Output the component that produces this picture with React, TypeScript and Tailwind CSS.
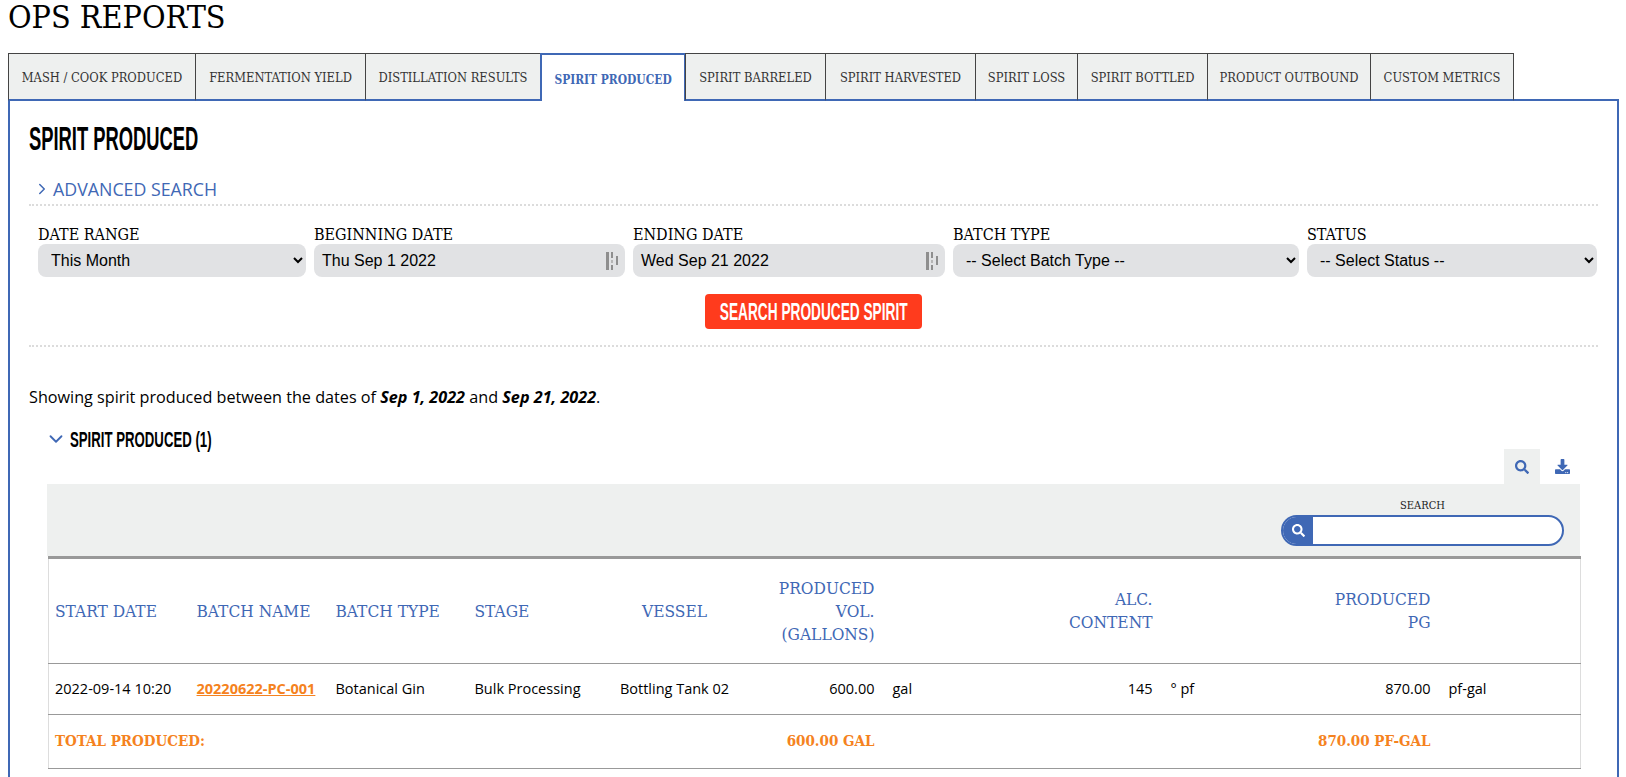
import { FaSearch, FaDownload } from "react-icons/fa";
import { ChevronRight, ChevronDown } from "lucide-react";

const slab = "font-['DejaVu_Serif_Condensed','DejaVu_Serif',serif]";
const bebas = "font-['Liberation_Sans',sans-serif]";
const tabs = [
  ["MASH / COOK PRODUCED", "w-[188px]"],
  ["FERMENTATION YIELD", "w-[171px]"],
  ["DISTILLATION RESULTS", "w-[176px]"],
  ["SPIRIT PRODUCED", "w-[146px]"],
  ["SPIRIT BARRELED", "w-[141px]"],
  ["SPIRIT HARVESTED", "w-[151px]"],
  ["SPIRIT LOSS", "w-[103px]"],
  ["SPIRIT BOTTLED", "w-[131px]"],
  ["PRODUCT OUTBOUND", "w-[164px]"],
  ["CUSTOM METRICS", "w-[144px]"],
];

function DateIcon() {
  return (
    <svg width="14" height="20" viewBox="0 0 14 20" className="shrink-0">
      <rect x="0" y="1" width="3" height="18" fill="#8e8e8e" />
      <rect x="5" y="1" width="2" height="6" fill="#8e8e8e" />
      <rect x="5" y="9" width="2" height="3" fill="#b5b5b5" />
      <rect x="5" y="14" width="2" height="5" fill="#8e8e8e" />
      <rect x="10" y="5" width="2" height="9" fill="#8e8e8e" />
    </svg>
  );
}

function Field({ label, children }: { label: string; children: React.ReactNode }) {
  return (
    <div className="flex flex-col">
      <div className={`${slab} text-[16px] leading-[19px] text-black`}>{label}</div>
      {children}
    </div>
  );
}

function Sel({ text }: { text: string }) {
  return (
    <select className="h-[33px] w-full rounded-[8px] bg-[#e1e2e4] pl-[9px] font-['Liberation_Sans',sans-serif] text-[16px] text-black outline-none">
      <option>{text}</option>
    </select>
  );
}

function DateBox({ text }: { text: string }) {
  return (
    <div className="flex h-[33px] items-center justify-between rounded-[8px] bg-[#e1e2e4] pl-[8px] pr-[5px] font-['Liberation_Sans',sans-serif] text-[16px] text-black">
      <span>{text}</span>
      <DateIcon />
    </div>
  );
}

const th = `${slab} text-[17.2px] leading-[23px] font-normal text-[#3f68b5] px-[7px] align-middle`;
const td = "px-[7px] align-middle text-[14.5px]";
const tot = `${slab} text-[15px] font-bold text-[#f58220] px-[7px] align-middle`;

export default function App() {
  return (
    <div className="flex h-[777px] flex-col overflow-hidden bg-white">
      <h1 className={`${slab} ml-[8px] h-[53px] shrink-0 text-[32px] leading-[34px] font-normal text-black`}>OPS REPORTS</h1>
      <div className="z-10 ml-[8px] flex h-[48px] shrink-0">
        {tabs.map(([t, w]) => {
          const active = t === "SPIRIT PRODUCED";
          return (
            <div
              key={t}
              className={`${w} ${slab} -mr-px flex items-center justify-center whitespace-nowrap pt-[3px] text-[12.8px] ${
                active
                  ? "border-2 border-b-0 border-[#3f68b5] bg-white font-bold text-[#3f68b5]"
                  : "border border-b-2 border-[#444] border-b-[#3f68b5] bg-[#eef0ef] text-[#333]"
              }`}
            >
              {active ? <span className="scale-x-[0.93] whitespace-nowrap">{t}</span> : t}
            </div>
          );
        })}
      </div>
      <div className="-mt-[2px] ml-[8px] mr-[7px] flex-1 border-2 border-[#3f68b5] px-[19px] pb-[60px]">
        <h2 className={`${bebas} mt-[22px] origin-left scale-x-[0.54] whitespace-nowrap text-[34px] leading-[30px] font-bold text-black`}>SPIRIT PRODUCED</h2>
        <div className="mt-[24px] flex h-[24px] items-center text-[#3f68b5]">
          <ChevronRight size={18} strokeWidth={2} className="ml-[4px] mr-[2px]" />
          <span className="font-['Open_Sans',sans-serif] text-[17.8px]">ADVANCED SEARCH</span>
        </div>
        <div className="mt-[3px] border-t-2 border-dotted border-[#dcdcdc]" />
        <div className="mt-[19px] grid grid-cols-[268px_311px_312px_346px_290px] gap-[8px] pl-[9px]">
          <Field label="DATE RANGE"><Sel text="This Month" /></Field>
          <Field label="BEGINNING DATE"><DateBox text="Thu Sep 1 2022" /></Field>
          <Field label="ENDING DATE"><DateBox text="Wed Sep 21 2022" /></Field>
          <Field label="BATCH TYPE"><Sel text="-- Select Batch Type --" /></Field>
          <Field label="STATUS"><Sel text="-- Select Status --" /></Field>
        </div>
        <div className="mt-[17px] flex justify-center">
          <div className="flex h-[35px] w-[217px] items-center justify-center rounded-[4px] bg-[#ff3b1d]">
            <span className={`${bebas} scale-x-[0.57] whitespace-nowrap text-[24px] font-bold text-white`}>SEARCH PRODUCED SPIRIT</span>
          </div>
        </div>
        <div className="mt-[16px] border-t-2 border-dotted border-[#dcdcdc]" />
        <p className="mt-[40px] font-['Open_Sans',sans-serif] text-[16.2px] leading-[20px] text-black">
          Showing spirit produced between the dates of <b><i>Sep 1, 2022</i></b> and <b><i>Sep 21, 2022</i></b>.
        </p>
        <div className="mt-[20px] flex h-[24px] items-center pl-[16px]">
          <ChevronDown size={22} strokeWidth={2} className="shrink-0 text-[#3f68b5]" />
          <span className={`${bebas} ml-[3px] origin-left scale-x-[0.6] whitespace-nowrap text-[22px] font-bold text-black`}>SPIRIT PRODUCED (1)</span>
        </div>
        <div className="ml-[18px] mr-[18px] flex flex-col">
          <div className="mt-[-2px] flex h-[35px] justify-end pr-[1px]">
            <div className="flex w-[36px] items-center justify-center bg-[#eef0ef] text-[#3f68b5]"><FaSearch size={14} /></div>
            <div className="ml-[5px] flex w-[34px] items-center justify-center text-[#3f68b5]"><FaDownload size={15} /></div>
          </div>
          <div className="flex h-[72px] flex-col items-end bg-[#eef0ef] pr-[16px]">
            <div className={`${slab} mt-[15px] w-[283px] text-center text-[11px] leading-[14px] text-[#222]`}>SEARCH</div>
            <div className="mt-[2px] flex h-[31px] w-[283px] overflow-hidden rounded-full border-2 border-[#3f68b5] bg-white">
              <div className="flex w-[30px] items-center justify-center bg-[#3f68b5] text-white"><FaSearch size={13} /></div>
            </div>
          </div>
          <table className="ml-px w-[1532px] table-fixed border-collapse border-l border-r border-t-[3px] border-[#ddd] border-t-[#999] font-['Open_Sans',sans-serif] text-black">
            <colgroup>
              <col className="w-[142px]" />
              <col className="w-[139px]" />
              <col className="w-[139px]" />
              <col className="w-[142px]" />
              <col className="w-[128px]" />
              <col className="w-[143px]" />
              <col className="w-[119px]" />
              <col className="w-[159px]" />
              <col className="w-[91px]" />
              <col className="w-[187px]" />
              <col className="w-[143px]" />
            </colgroup>
            <tbody>
              <tr className="h-[106px] border-b border-[#999]">
                <th className={`${th} pl-[6px] text-left`}>START DATE</th>
                <th className={`${th} pl-[6px] text-left`}>BATCH NAME</th>
                <th className={`${th} pl-[6px] text-left`}>BATCH TYPE</th>
                <th className={`${th} pl-[6px] text-left`}>STAGE</th>
                <th className={`${th} text-center`}>VESSEL</th>
                <th className={`${th} text-right`}>PRODUCED<br />VOL.<br />(GALLONS)</th>
                <th className={th}></th>
                <th className={`${th} text-right`}>ALC.<br />CONTENT</th>
                <th className={th}></th>
                <th className={`${th} text-right`}>PRODUCED<br />PG</th>
                <th className={th}></th>
              </tr>
              <tr className="h-[51px] border-b border-[#999]">
                <td className={`${td} pl-[6px]`}>2022-09-14 10:20</td>
                <td className={`${td} pl-[6px] font-bold text-[#f58220] underline`}>20220622-PC-001</td>
                <td className={`${td} pl-[6px]`}>Botanical Gin</td>
                <td className={`${td} pl-[6px]`}>Bulk Processing</td>
                <td className={`${td} text-center`}>Bottling Tank 02</td>
                <td className={`${td} text-right`}>600.00</td>
                <td className={`${td} pl-[11px]`}>gal</td>
                <td className={`${td} text-right`}>145</td>
                <td className={`${td} pl-[11px]`}>° pf</td>
                <td className={`${td} text-right`}>870.00</td>
                <td className={`${td} pl-[11px]`}>pf-gal</td>
              </tr>
              <tr className="h-[54px] border-b border-[#999]">
                <td className={`${tot} pl-[6px]`} colSpan={5}>TOTAL PRODUCED:</td>
                <td className={`${tot} text-right`}>600.00 GAL</td>
                <td className={tot} colSpan={3}></td>
                <td className={`${tot} text-right`}>870.00 PF-GAL</td>
                <td className={tot}></td>
              </tr>
            </tbody>
          </table>
        </div>
      </div>
    </div>
  );
}
